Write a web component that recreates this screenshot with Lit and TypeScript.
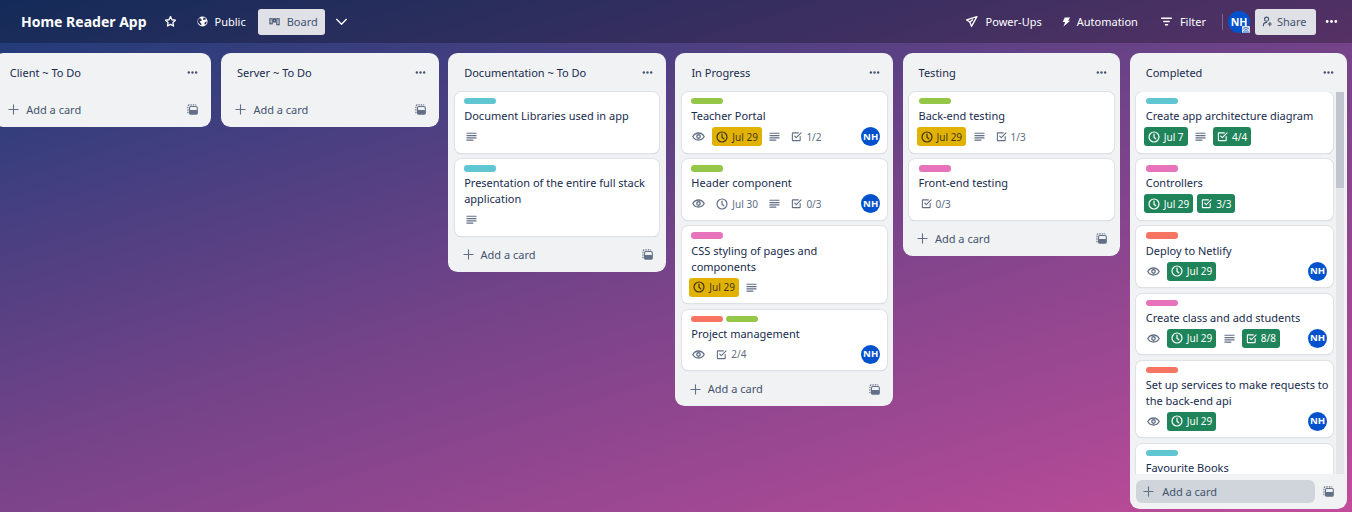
import { LitElement, html, css, svg, nothing } from 'lit';
import { customElement } from 'lit/decorators.js';

type Tone = 'plain' | 'yellow' | 'green';
interface Card {
  labels: string[];
  title: string;
  watch?: boolean;
  date?: string;
  tone?: Tone;
  desc?: boolean;
  checks?: string;
  checkTone?: Tone;
  member?: boolean;
}
interface List {
  name: string;
  cards: Card[];
  scroll?: boolean;
}

const CYAN = '#60c6d2';
const LIME = '#94c748';
const PINK = '#e774bb';
const RED = '#f87462';

const LISTS: List[] = [
  { name: 'Client ~ To Do', cards: [] },
  { name: 'Server ~ To Do', cards: [] },
  {
    name: 'Documentation ~ To Do',
    cards: [
      { labels: [CYAN], title: 'Document Libraries used in app', desc: true },
      { labels: [CYAN], title: 'Presentation of the entire full stack application', desc: true },
    ],
  },
  {
    name: 'In Progress',
    cards: [
      { labels: [LIME], title: 'Teacher Portal', watch: true, date: 'Jul 29', tone: 'yellow', desc: true, checks: '1/2', member: true },
      { labels: [LIME], title: 'Header component', watch: true, date: 'Jul 30', tone: 'plain', desc: true, checks: '0/3', member: true },
      { labels: [PINK], title: 'CSS styling of pages and components', date: 'Jul 29', tone: 'yellow', desc: true },
      { labels: [RED, LIME], title: 'Project management', watch: true, checks: '2/4', member: true },
    ],
  },
  {
    name: 'Testing',
    cards: [
      { labels: [LIME], title: 'Back-end testing', date: 'Jul 29', tone: 'yellow', desc: true, checks: '1/3' },
      { labels: [PINK], title: 'Front-end testing', checks: '0/3' },
    ],
  },
  {
    name: 'Completed',
    scroll: true,
    cards: [
      { labels: [CYAN], title: 'Create app architecture diagram', date: 'Jul 7', tone: 'green', desc: true, checks: '4/4', checkTone: 'green' },
      { labels: [PINK], title: 'Controllers', date: 'Jul 29', tone: 'green', checks: '3/3', checkTone: 'green' },
      { labels: [RED], title: 'Deploy to Netlify', watch: true, date: 'Jul 29', tone: 'green', member: true },
      { labels: [PINK], title: 'Create class and add students', watch: true, date: 'Jul 29', tone: 'green', desc: true, checks: '8/8', checkTone: 'green', member: true },
      { labels: [RED], title: 'Set up services to make requests to the back-end api', watch: true, date: 'Jul 29', tone: 'green', member: true },
      { labels: [CYAN], title: 'Favourite Books' },
    ],
  },
];

const icon = (body: unknown, cls = 'ic') =>
  html`<svg class=${cls} viewBox="0 0 24 24" fill="none" stroke="currentColor" stroke-width="2.4" stroke-linecap="round" stroke-linejoin="round">${body}</svg>`;

const clock = () => icon(svg`<circle cx="12" cy="12" r="10"/><path d="M12 6v6.500l3.500 3"/>`, 'ic clock');
const eye = () => icon(svg`<path d="M1.500 12C4 7.500 7.500 5.500 12 5.500s8 2 10.500 6.500c-2.500 4.500-6 6.500-10.500 6.500S4 16.500 1.500 12z"/><circle cx="12" cy="12" r="3.200"/>`);
const lines = () => icon(svg`<path d="M2 5h20M2 10h20M2 15h20M2 20h13"/>`, 'ic lines');
const check = () => icon(svg`<path d="M20 12v8a1 1 0 0 1-1 1H4a1 1 0 0 1-1-1V5a1 1 0 0 1 1-1h12"/><path d="M8 11l3.500 3.500L22 4"/>`, 'ic chk');
const plus = () => icon(svg`<path d="M12 2v20M2 12h20"/>`, 'ic plus');
const template = () =>
  html`<svg class="ic tpl" viewBox="0 0 24 24"><path fill="none" stroke="currentColor" stroke-width="2.400" stroke-dasharray="3 2.400" d="M2 20V5a3 3 0 0 1 3-3h15"/><rect x="5.500" y="5.500" width="17" height="17" rx="3" fill="none" stroke="currentColor" stroke-width="2.400"/><rect x="6" y="13" width="16" height="9" rx="2" fill="currentColor"/></svg>`;
const dots = () =>
  html`<svg class="ic dots" viewBox="0 0 24 24" fill="currentColor"><circle cx="4" cy="12" r="2.600"/><circle cx="12" cy="12" r="2.600"/><circle cx="20" cy="12" r="2.600"/></svg>`;

@customElement('app-root')
export class AppRoot extends LitElement {
  static styles = css`
    :host {
      display: block;
      width: 1352px;
      height: 512px;
      overflow: hidden;
      font-family: 'Noto Sans', sans-serif;
      font-size: 11px;
      line-height: 16px;
      color: #172b4d;
      background: linear-gradient(163deg, #1b3b78, #754389 50%, #c24c9a);
    }
    svg { display: block; flex: none; }
    .ic { width: 13px; height: 13px; }
    .clock { width: 12px; height: 12px; }
    .lines { width: 11px; height: 11px; }
    .chk { width: 11px; height: 11px; }
    .dots { width: 11px; height: 11px; }
    .plus { width: 11px; height: 11px; }
    .tpl { width: 11px; height: 11px; }

    .header {
      display: flex;
      align-items: center;
      height: 43px;
      padding: 0 14px 0 21px;
      box-sizing: border-box;
      background: rgba(0, 0, 0, 0.26);
      color: #fff;
    }
    .title { font-size: 14px; font-weight: 700; margin-right: 17px; }
    .hitem { display: flex; align-items: center; gap: 6px; }
    .star { margin-right: 20px; }
    .public { margin-right: 12px; gap: 7px; }
    .public svg { width: 11px; height: 11px; }
    .btn {
      display: flex;
      align-items: center;
      gap: 7px;
      height: 26px;
      width: 67px;
      box-sizing: border-box;
      padding: 0 0 0 11px;
      border-radius: 3px;
      background: #dfe1e6;
      color: #42526e;
    }
    .btn > svg:first-child { width: 11px; height: 11px; }
    .btn.share { padding: 0 0 0 7px; gap: 4px; width: 61px; }
    .chev { margin-left: 10px; }
    .plane { margin-right: 19px; gap: 8px; }
    .bolt { margin-right: 22px; }
    .bolt svg { width: 10px; height: 10px; }
    .filter { gap: 7px; }
    .spacer { flex: 1; }
    .divider { width: 1px; height: 16px; background: rgba(255, 255, 255, 0.25); margin: 0 5px 0 16px; }
    .avatar {
      display: flex;
      align-items: center;
      justify-content: center;
      border-radius: 50%;
      background: #0052cc;
      color: #fff;
      font-weight: 700;
    }
    .me { position: relative; width: 22px; height: 22px; margin-right: 5px; font-size: 10.6px; }
    .me svg { position: absolute; right: 0; bottom: 0; width: 8px; height: 7px; }
    .more { margin-left: 9px; }
    .more .dots { width: 13px; height: 13px; }

    .board {
      display: flex;
      align-items: flex-start;
      gap: 9.6px;
      margin-left: -6.2px;
      padding-top: 10px;
    }
    .list {
      flex: none;
      width: 217.6px;
      box-sizing: border-box;
      border-radius: 9.6px;
      background: #f1f2f4;
      display: flex;
      flex-direction: column;
    }
    .list.scroll { height: 456px; }
    .lhead {
      display: flex;
      align-items: center;
      justify-content: space-between;
      height: 38.5px;
      flex: none;
      padding: 1px 13px 0 16px;
      box-sizing: border-box;
    }
    .lhead svg { color: #44546f; }
    .cards {
      display: flex;
      flex-direction: column;
      gap: 6.4px;
      padding: 0.5px 6.4px 0.6px;
    }
    .scroller {
      position: relative;
      flex: 1;
      min-height: 0;
      overflow: hidden;
      padding-right: 14px;
      padding-bottom: 0;
    }
    .track { position: absolute; top: 0; bottom: 0; right: 3px; width: 8px; background: #e4e6ea; }
    .thumb { height: 96px; background: #c1c5cf; }
    .card {
      flex: none;
      background: #fff;
      border-radius: 6.4px;
      padding: 6px 6.4px 6.6px 9.6px;
      box-shadow: 0 0 0 1px #dfe1e6, 0 1px 1px #c1c7d0;
    }
    .labels { display: flex; gap: 3px; height: 6.4px; margin-bottom: 3.800px; }
    .label { width: 32px; height: 6.4px; border-radius: 3.200px; }
    .ctitle { margin-right: -4px; }
    .meta {
      display: flex;
      align-items: center;
      min-height: 19px;
      margin: 3px 0 0 -2px;
      color: #5e6c84;
      font-size: 10px;
    }
    .meta .ic { color: #626f86; }
    .m { display: flex; align-items: center; gap: 4px; height: 19px; padding: 0 4px; margin-right: 4px; border-radius: 3px; }
    .m.watch { padding: 0 2px 0 3px; margin-right: 5px; }
    .m.desc { padding: 0 2px; margin: 0 5px 0 1.5px; }
    .m.yellow { background: #e2b203; color: #44381a; }
    .m.yellow .ic { color: #3d3414; }
    .m.green { background: #1f845a; color: #fff; }
    .m.green .ic { color: #fff; }
    .nh { width: 19px; height: 19px; margin-left: auto; font-size: 9.6px; }
    .add {
      display: flex;
      align-items: center;
      justify-content: space-between;
      height: 35.6px;
      padding: 1px 13px 0 14.4px;
      box-sizing: border-box;
      color: #44546f;
      flex: none;
    }
    .addl { display: flex; align-items: center; gap: 7px; flex: 1; height: 23px; border-radius: 6px; }
    .add .ic { color: #626f86; }
    .scroll .add { padding: 0 13px 0 6.4px; gap: 8px; height: 35px; }
    .scroll .addl { background: #d0d4db; padding-left: 7px; gap: 8px; }
  `;

  private meta(c: Card) {
    if (!(c.watch || c.date || c.desc || c.checks || c.member)) return nothing;
    return html`<div class="meta">
      ${c.watch ? html`<span class="m watch">${eye()}</span>` : nothing}
      ${c.date ? html`<span class="m ${c.tone ?? ''}">${clock()}${c.date}</span>` : nothing}
      ${c.desc ? html`<span class="m desc">${lines()}</span>` : nothing}
      ${c.checks ? html`<span class="m ${c.checkTone ?? ''}">${check()}${c.checks}</span>` : nothing}
      ${c.member ? html`<span class="avatar nh">NH</span>` : nothing}
    </div>`;
  }

  private card(c: Card) {
    return html`<div class="card">
      <div class="labels">${c.labels.map((l) => html`<div class="label" style="background:${l}"></div>`)}</div>
      <div class="ctitle">${c.title}</div>
      ${this.meta(c)}
    </div>`;
  }

  private list(l: List) {
    return html`<section class="list ${l.scroll ? 'scroll' : ''}">
      <div class="lhead"><span>${l.name}</span>${dots()}</div>
      ${l.cards.length
        ? html`<div class="cards ${l.scroll ? 'scroller' : ''}">
            ${l.cards.map((c) => this.card(c))}
            ${l.scroll ? html`<div class="track"><div class="thumb"></div></div>` : nothing}
          </div>`
        : nothing}
      <div class="add">
        <span class="addl">${plus()}Add a card</span>
        ${template()}
      </div>
    </section>`;
  }

  render() {
    return html`
      <header class="header">
        <div class="title">Home Reader App</div>
        <div class="hitem star">${icon(svg`<path d="M12 3l2.800 5.800 6.200.9-4.500 4.400 1.100 6.300L12 17.400l-5.600 3 1.100-6.300L3 9.700l6.200-.9z"/>`)}</div>
        <div class="hitem public">
          <svg class="ic" viewBox="0 0 24 24"><circle cx="12" cy="12" r="11" fill="#fff"/><path fill="#2c2a5c" d="M5 5c2 0 4 1 5 3s-1 3-2 3-3 2-1 3 3 3 3 6c-4-1-8-4-8-8 0-3 1-5 3-7zM14 3c2 0 5 1 6 4l-3 1c-2 1-4 0-4-1s1-2 1-4zM21 12c0 3-1 6-4 7-1-2-1-4 0-5s3-2 4-2z"/></svg>
          Public
        </div>
        <div class="btn">
          <svg class="ic" viewBox="0 0 24 24" fill="none" stroke="currentColor" stroke-width="2.400"><rect x="2" y="6" width="5" height="11"/><rect x="10" y="6" width="4" height="7"/><rect x="17" y="6" width="5" height="13"/></svg>
          Board
        </div>
        <div class="hitem chev">${icon(svg`<path d="M3 8l9 9 9-9"/>`)}</div>
        <div class="spacer"></div>
        <div class="hitem plane">${icon(svg`<path d="M22 3L3 9l6 4 3 8z"/><path d="M9 13l5-4"/>`)}Power-Ups</div>
        <div class="hitem bolt">
          <svg viewBox="0 0 24 24" fill="currentColor"><path d="M9 1h13l-5 8h5L6 23l4-11H4z"/></svg>Automation
        </div>
        <div class="hitem filter">${icon(svg`<path d="M3 6h18M7 12h10M10 18h4"/>`)}Filter</div>
        <div class="divider"></div>
        <div class="avatar me">NH
          <svg viewBox="0 0 24 21"><rect width="24" height="21" rx="3" fill="#dfe1e6"/><path fill="none" stroke="#0052cc" stroke-width="2.500" d="M3 10c5-7 13-7 18 0M7 13c3-3 7-3 10 0M3 18h18"/></svg>
        </div>
        <div class="btn share">
          ${icon(svg`<circle cx="10" cy="7" r="4.500"/><path d="M3 21c0-5 3-7 7-7M17 14v7M13.500 17.500h7"/>`)}
          Share
        </div>
        <div class="more hitem">${dots()}</div>
      </header>
      <main class="board">${LISTS.map((l) => this.list(l))}</main>
    `;
  }
}
